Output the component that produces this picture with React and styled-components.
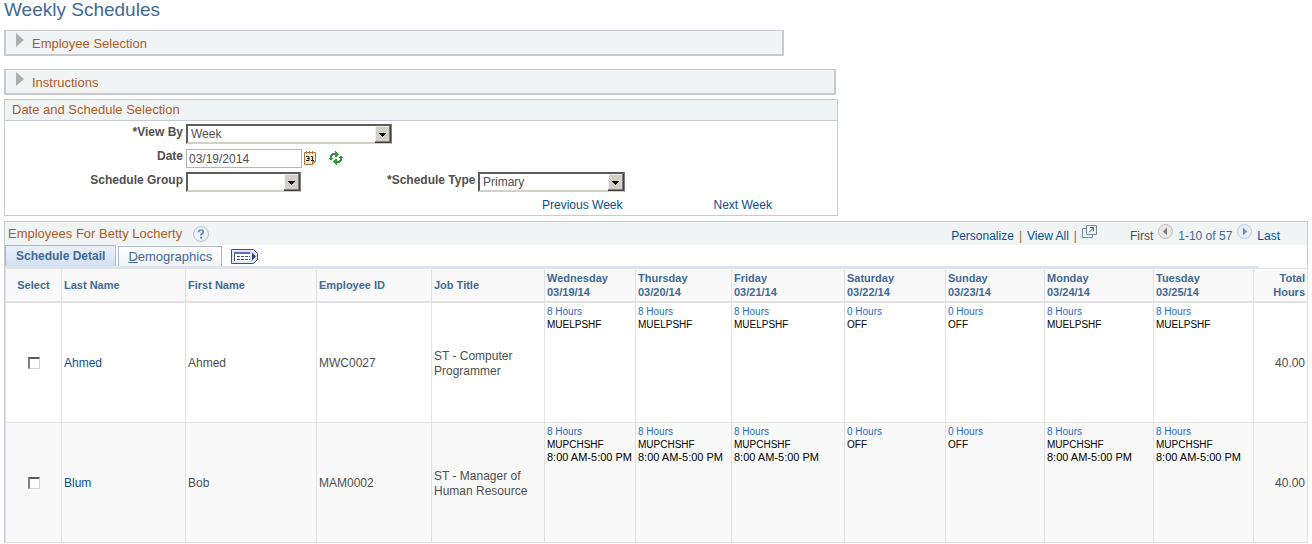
import styled, { createGlobalStyle } from 'styled-components'

const GlobalStyle = createGlobalStyle`
  * {
    box-sizing: border-box;
  }

  body {
    margin: 0;
    background: #fff;
    color: #4f4f4f;
    font-family: "Liberation Sans", Arial, sans-serif;
    font-size: 12px;
    line-height: 16px;
  }

  button, input, select {
    font: inherit;
    color: inherit;
    margin: 0;
  }
`

const Page = styled.main`
  padding: 0 4px;
`

const Title = styled.h1`
  margin: 0 0 10px;
  font-size: 19px;
  font-weight: 400;
  line-height: 20px;
  color: #426997;
`

const Disclosure = styled.button`
  display: flex;
  align-items: flex-start;
  gap: 8px;
  width: 100%;
  max-width: ${({ $width }) => $width}px;
  height: 26px;
  margin-bottom: ${({ $gap }) => $gap}px;
  padding: 2px 10px;
  border: solid #c6cad1;
  border-width: 1px 2px 2px;
  background: #f0f4f5;
  color: #b35a1f;
  font-size: 13px;
  line-height: 22px;
  text-align: left;
`

const Panel = styled.section`
  max-width: 834px;
  margin-bottom: 5px;
  border: 1px solid #c6cad1;
`

const PanelTitle = styled.h2`
  margin: 0;
  padding: 0 7px;
  border-bottom: 1px solid #c6cad1;
  background: #f0f4f5;
  color: #b35a1f;
  font-size: 13px;
  font-weight: 400;
  line-height: 20px;
`

const Form = styled.form`
  display: grid;
  grid-template-columns: 178px 198px 88px 1fr;
  grid-auto-rows: 20px;
  gap: 4px 3px;
  padding-top: 3px;
`

const Label = styled.label`
  grid-column: ${({ $column = 1 }) => $column};
  font-weight: 700;
  text-align: right;
  white-space: nowrap;
`

const Control = styled.div`
  display: flex;
  align-items: center;
`

const SelectBox = styled.div`
  position: relative;
  flex: none;
  width: ${({ $width }) => $width}px;
  height: 20px;

  svg {
    position: absolute;
    top: 2px;
    right: 1px;
    pointer-events: none;
  }
`

const Select = styled.select`
  appearance: none;
  width: 100%;
  height: 20px;
  padding: 0 18px 0 3px;
  border: 2px solid;
  border-color: #5c5c5c #808080 #d4d0c8 #5c5c5c;
  border-radius: 0;
  background: #fff;
`

const DateInput = styled.input`
  align-self: flex-end;
  width: 116px;
  height: 19px;
  margin-right: 2px;
  padding: 0 2px;
  border: 1px solid #b5b5b5;
`

const IconButton = styled.button`
  display: flex;
  margin-right: ${({ $gap = 0 }) => $gap}px;
  padding: 0;
  border: 0;
  background: none;
`

const Link = styled.a`
  color: #0b4f96;
  text-decoration: none;
`

const WeekLinks = styled.nav`
  display: flex;
  gap: 91px;
  padding: 5px 0 2px 537px;
`

const Grid = styled.section`
  border: solid #c6cad1;
  border-width: 1px 1px 0;
`

const GridBar = styled.header`
  display: flex;
  align-items: center;
  height: 23px;
  padding: 0 27px 0 3px;
  background: #f0f4f5;
`

const GridTitle = styled.h2`
  margin: 0 11px 0 0;
  color: #b35a1f;
  font-size: 13px;
  font-weight: 400;
`

const GridTools = styled.div`
  display: flex;
  align-items: center;
  gap: 5px;
  margin: 4px 0 0 auto;
  white-space: nowrap;

  button {
    margin-bottom: 8px;
  }
`

const Divider = styled.span`
  color: ${({ $color }) => $color};
`

const Pager = styled.div`
  display: flex;
  align-items: center;
  gap: 5px;
  margin-left: 28px;
`

const Range = styled.span`
  color: #426997;
`

const Tabs = styled.div`
  display: flex;
  align-items: flex-end;
  gap: 2px;
  height: 21px;
`

const Tab = styled.button`
  height: ${({ $active }) => ($active ? 21 : 20)}px;
  padding: 0 ${({ $active }) => ($active ? 10 : 9)}px;
  border: solid #a8b8cc;
  border-width: 1px 1px 0;
  background: ${({ $active }) =>
    $active ? 'linear-gradient(#eaf1fb, #d3e0f3)' : 'linear-gradient(#fff, #f3f3f3)'};
  color: #426997;
  font-size: ${({ $active }) => ($active ? 12 : 13)}px;
  font-weight: ${({ $active }) => ($active ? 700 : 400)};
  line-height: 20px;
`

const ShowAll = styled(IconButton)`
  margin: 0 0 2px 7px;
`

const TabLine = styled.div`
  height: 2px;
  margin-right: 48px;
  background: #dae5f4;
`

const Table = styled.table`
  width: 100%;
  table-layout: fixed;
  border-spacing: 0;
  border-top: 1px solid #e2e2e2;
  border-right: 1px solid #e2e2e2;
`

const Th = styled.th`
  height: 34px;
  padding: 2px;
  border-left: 1px solid #e2e2e2;
  border-bottom: 2px solid #e2e2e2;
  background: #f9f9f9;
  color: #426997;
  font-size: 11px;
  line-height: 14px;
  text-align: ${({ $align = 'left' }) => $align};
`

const Row = styled.tr`
  background: ${({ $shaded }) => ($shaded ? '#f9f9f9' : '#fff')};
`

const Td = styled.td`
  height: 120px;
  padding: 4px 2px 2px;
  border-left: 1px solid #e2e2e2;
  border-bottom: 1px solid #e2e2e2;
  line-height: 15px;
  text-align: ${({ $align = 'left' }) => $align};
`

const CheckCell = styled(Td)`
  padding: 2px;
`

const DayCell = styled(Td)`
  padding: 2px;
  vertical-align: top;
  color: #000;
  font-size: 10px;
  line-height: 13px;
  white-space: nowrap;
`

const Hours = styled.div`
  color: #2a6ac8;
`

const Shift = styled.div``

const Time = styled.div`
  font-size: 11px;
`

const Checkbox = styled.input`
  appearance: none;
  display: block;
  width: 12px;
  height: 12px;
  margin: 0 auto;
  border: solid;
  border-width: 2px 1px 1px 2px;
  border-color: #5c5c5c #d8d4cf #d8d4cf #808080;
  background: #fff;
`

const Triangle = () => (
  <svg width="8" height="14" viewBox="0 0 8 14" aria-hidden="true">
    <path d="M0 0L8 7L0 14Z" fill="#aeaeae" />
  </svg>
)

const DropArrow = () => (
  <svg width="16" height="17" viewBox="0 0 16 17" shapeRendering="crispEdges" aria-hidden="true">
    <path d="M0 0H16V17H0Z" fill="#404040" />
    <path d="M0 0H15V16H0Z" fill="#808080" />
    <path d="M0 0H14V15H0Z" fill="#f4f2ee" />
    <path d="M1 1H14V15H1Z" fill="#d4d0c8" />
    <path d="M4 7H11V8H10V9H9V10H8V11H7V10H6V9H5V8H4Z" fill="#000" />
  </svg>
)

const CalendarIcon = () => (
  <svg width="12" height="14" viewBox="0 0 12 14" aria-hidden="true">
    <path d="M.5 1.5H11.5V10.5L8.5 13.5H.5Z" fill="#fbe9c8" stroke="#a8733f" />
    <path d="M11.5 10.5H8.5V13.5" fill="#d8a268" stroke="#a8733f" />
    <path d="M2.5 0V3M5.5 0V3M8.5 0V3" stroke="#a8733f" />
    <path d="M2 5.5H5V9.5H2M3 7.5H5M7 5.5H8.5V9.5M7 9.5H10" fill="none" stroke="#222" />
  </svg>
)

const RefreshIcon = () => (
  <svg width="14" height="14" viewBox="0 0 14 14" fill="#2f9a37" shapeRendering="crispEdges" aria-hidden="true">
    <path d="M6 0H7V1H8V2H9V3H10V4H9V5H8V6H6V4H4V5H3V7H4V8H3V9H1V8H0V7H1V4H2V3H3V2H6Z" />
    <path d="M8 14H7V13H6V12H5V11H4V10H5V9H6V8H8V10H10V9H11V7H10V6H11V5H13V6H14V7H13V10H12V11H11V12H8Z" />
  </svg>
)

const HelpIcon = () => (
  <svg width="16" height="16" viewBox="0 0 16 16" aria-hidden="true">
    <circle cx="8" cy="8" r="7.5" fill="#eef3fa" stroke="#b4c3d4" />
    <path d="M5.7 6.2Q5.8 4 8 4Q10.3 4 10.3 6Q10.3 7 9 7.7Q8 8.2 8 9.5" fill="none" stroke="#6389b8" strokeWidth="1.7" />
    <path d="M7 10.8H9V12.6H7Z" fill="#6389b8" />
  </svg>
)

const ZoomIcon = () => (
  <svg width="15" height="13" viewBox="0 0 15 13" fill="none" stroke="#6d8cab" aria-hidden="true">
    <path d="M4 3.5H.5V12.5H10.5V10" />
    <path d="M4.5.5H14.5V9.5H4.5Z" fill="#f4f8fb" />
    <path d="M7 7.5L11.5 3M8 2.5H11.5V6.5" stroke="#40658c" />
  </svg>
)

const PageIcon = ({ next }) => (
  <svg width="15" height="15" viewBox="0 0 15 15" aria-hidden="true">
    <circle cx="7.5" cy="7.5" r="7" fill={next ? '#e7eff9' : '#e8e8e8'} stroke={next ? '#b9cbe0' : '#bdbdbd'} />
    <path
      d={next ? 'M6 3.5L10 7.5L6 11.5Z' : 'M9 3.5L5 7.5L9 11.5Z'}
      fill={next ? '#5c94cf' : '#7c7c7c'}
    />
  </svg>
)

const ShowAllIcon = () => (
  <svg width="27" height="15" viewBox="0 0 27 15" aria-hidden="true">
    <path d="M.5.5H22.5L26.5 4.5V10.5L22.5 14.5H.5Z" fill="#dfe8f8" stroke="#4b4b7c" />
    <path d="M3 3H19V12H3Z" fill="#fff" />
    <path d="M3 3H19V5H3Z" fill="#5b70c4" />
    <path d="M3.5 5V12" stroke="#4b4b7c" />
    <path d="M6 7.5H19M6 10.5H19" stroke="#4b4b7c" strokeDasharray="3 1" />
    <path d="M21 3.5L25 7.5L21 11.5Z" fill="#3d3d7c" />
  </svg>
)

const columns = [
  { label: 'Select', width: 56, align: 'center' },
  { label: 'Last Name', width: 124 },
  { label: 'First Name', width: 131 },
  { label: 'Employee ID', width: 115 },
  { label: 'Job Title', width: 113 },
  { label: 'Wednesday', date: '03/19/14', width: 91 },
  { label: 'Thursday', date: '03/20/14', width: 96 },
  { label: 'Friday', date: '03/21/14', width: 113 },
  { label: 'Saturday', date: '03/22/14', width: 101 },
  { label: 'Sunday', date: '03/23/14', width: 99 },
  { label: 'Monday', date: '03/24/14', width: 109 },
  { label: 'Tuesday', date: '03/25/14', width: 100 },
  { label: 'Total Hours', width: 54, align: 'right' },
]

const week = (shift, time) => {
  const on = { hours: 8, shift, time }
  const off = { hours: 0, shift: 'OFF' }
  return [on, on, on, off, off, on, on]
}

const employees = [
  {
    id: 'MWC0027',
    last: 'Ahmed',
    first: 'Ahmed',
    job: 'ST - Computer Programmer',
    days: week('MUELPSHF'),
    total: '40.00',
  },
  {
    id: 'MAM0002',
    last: 'Blum',
    first: 'Bob',
    job: 'ST - Manager of Human Resource',
    days: week('MUPCHSHF', '8:00 AM-5:00 PM'),
    total: '40.00',
  },
]

function Dropdown({ id, width, options }) {
  return (
    <SelectBox $width={width}>
      <Select id={id}>
        {options.map((option) => (
          <option key={option}>{option}</option>
        ))}
      </Select>
      <DropArrow />
    </SelectBox>
  )
}

function ScheduleForm() {
  return (
    <Panel>
      <PanelTitle>Date and Schedule Selection</PanelTitle>
      <Form>
        <Label htmlFor="viewBy">*View By</Label>
        <Control>
          <Dropdown id="viewBy" width={206} options={['Week']} />
        </Control>

        <Label htmlFor="date">Date</Label>
        <Control>
          <DateInput id="date" defaultValue="03/19/2014" />
          <IconButton type="button" aria-label="Choose a date" $gap={13}>
            <CalendarIcon />
          </IconButton>
          <IconButton type="button" aria-label="Refresh">
            <RefreshIcon />
          </IconButton>
        </Control>

        <Label htmlFor="group">Schedule Group</Label>
        <Control>
          <Dropdown id="group" width={115} options={['']} />
        </Control>
        <Label htmlFor="type" $column={3}>*Schedule Type</Label>
        <Control>
          <Dropdown id="type" width={147} options={['Primary']} />
        </Control>
      </Form>
      <WeekLinks>
        <Link href="#previous">Previous Week</Link>
        <Link href="#next">Next Week</Link>
      </WeekLinks>
    </Panel>
  )
}

function EmployeeTable() {
  return (
    <Table>
      <colgroup>
        {columns.map(({ label, width }) => (
          <col key={label} width={width} />
        ))}
      </colgroup>
      <thead>
        <tr>
          {columns.map(({ label, date, align }) => (
            <Th key={label} scope="col" $align={align}>
              {label}
              {date && <br />}
              {date}
            </Th>
          ))}
        </tr>
      </thead>
      <tbody>
        {employees.map((employee, index) => (
          <Row key={employee.id} $shaded={index % 2 === 1}>
            <CheckCell>
              <Checkbox type="checkbox" aria-label={`Select ${employee.first} ${employee.last}`} />
            </CheckCell>
            <Td>
              <Link href={`#${employee.id}`}>{employee.last}</Link>
            </Td>
            <Td>{employee.first}</Td>
            <Td>{employee.id}</Td>
            <Td>{employee.job}</Td>
            {employee.days.map((day, i) => (
              <DayCell key={i}>
                <Hours>{day.hours} Hours</Hours>
                <Shift>{day.shift}</Shift>
                {day.time && <Time>{day.time}</Time>}
              </DayCell>
            ))}
            <Td $align="right">{employee.total}</Td>
          </Row>
        ))}
      </tbody>
    </Table>
  )
}

function App() {
  return (
    <Page>
      <GlobalStyle />
      <Title>Weekly Schedules</Title>
      <Disclosure $width={780} $gap={13} aria-expanded="false">
        <Triangle />
        Employee Selection
      </Disclosure>
      <Disclosure $width={832} $gap={4} aria-expanded="false">
        <Triangle />
        Instructions
      </Disclosure>

      <ScheduleForm />

      <Grid>
        <GridBar>
          <GridTitle>Employees For Betty Locherty</GridTitle>
          <IconButton aria-label="Help">
            <HelpIcon />
          </IconButton>
          <GridTools>
            <Link href="#personalize">Personalize</Link>
            <Divider $color="#8a7a2c">|</Divider>
            <Link href="#all">View All</Link>
            <Divider $color="#c8453b">|</Divider>
            <IconButton aria-label="Open in a new window">
              <ZoomIcon />
            </IconButton>
            <Pager>
              <span>First</span>
              <IconButton aria-label="Previous rows">
                <PageIcon />
              </IconButton>
              <Range>1-10 of 57</Range>
              <IconButton aria-label="Next rows">
                <PageIcon next />
              </IconButton>
              <Link href="#last">Last</Link>
            </Pager>
          </GridTools>
        </GridBar>
        <Tabs>
          <Tab $active>Schedule Detail</Tab>
          <Tab>
            <u>D</u>emographics
          </Tab>
          <ShowAll aria-label="Show all columns">
            <ShowAllIcon />
          </ShowAll>
        </Tabs>
        <TabLine />
        <EmployeeTable />
      </Grid>
    </Page>
  )
}

export default App
